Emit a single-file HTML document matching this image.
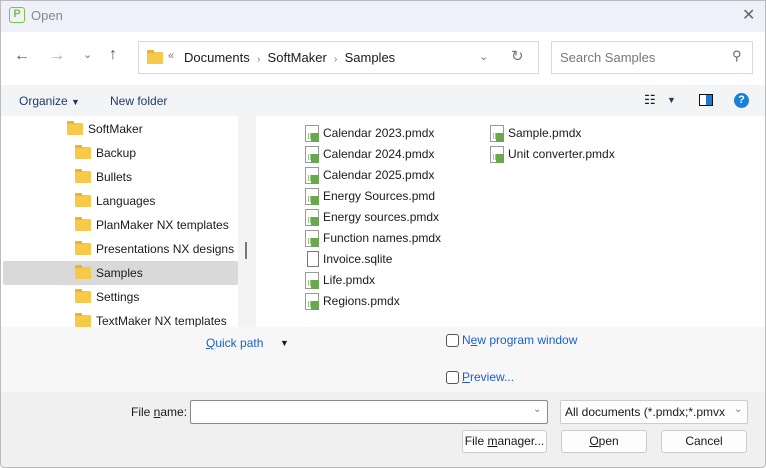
<!DOCTYPE html><html><head><style>
*{box-sizing:border-box;margin:0;padding:0}
body{width:766px;height:468px;overflow:hidden;font-family:"Liberation Sans",sans-serif;font-size:12px;color:#1a1a1a;background:#fff;position:relative}
.a{position:absolute}
.fold{position:absolute;width:16px;height:12px;background:#f7c948;border-radius:1px}
.fold:before{content:"";position:absolute;left:0;top:-2px;width:7px;height:3px;background:#e8b23a;border-radius:1px 1px 0 0}
.fi{position:absolute;width:14px;height:17px;border:1px solid #999;background:#fff}
.fi:after{content:"";position:absolute;right:-1px;bottom:-1px;width:8px;height:9px;background:#6aa84f}
.fi:before{content:"";position:absolute;left:2px;top:7px;width:5px;height:6px;background:repeating-linear-gradient(90deg,#9bc88a 0 1px,#fff 1px 2px)}
.btn{position:absolute;height:23px;border:1px solid #ccc;background:#fdfdfd;border-radius:3px;text-align:center;line-height:21px}
.lnk{color:#1a5fd0}
</style></head><body>
<div class="a" style="left:0;top:0;width:766px;height:32px;background:#eef1f9;border:1px solid #bbb;border-bottom:none"></div>
<div class="a" style="left:9px;top:7px;width:16px;height:16px;border:1.5px solid #7cc242;border-radius:3px;color:#7cc242;font-weight:bold;font-size:11px;text-align:center;line-height:13px">P</div>
<div class="a" style="left:31px;top:8px;color:#888;font-size:13px">Open</div>
<div class="a" style="left:742px;top:5px;color:#666;font-size:16px">✕</div>
<div class="a" style="left:0;top:32px;width:766px;height:436px;border:1px solid #bbb;border-top:none;border-radius:0 0 4px 4px"></div>
<div class="a" style="left:14px;top:47px;color:#555;font-size:16px">←</div>
<div class="a" style="left:49px;top:47px;color:#aaa;font-size:16px">→</div>
<div class="a" style="left:83px;top:48px;color:#777;font-size:11px">⌄</div>
<div class="a" style="left:109px;top:46px;color:#555;font-size:16px">↑</div>
<div class="a" style="left:138px;top:41px;width:401px;height:33px;border:1px solid #d9d9d9"></div>
<div class="fold" style="left:147px;top:52px"></div>
<div class="a" style="left:168px;top:50px;color:#777;font-size:11px">«</div>
<div class="a" style="left:184px;top:50px;font-size:13px">Documents&nbsp;&nbsp;<span style="color:#777;font-size:10px">›</span>&nbsp;&nbsp;SoftMaker&nbsp;&nbsp;<span style="color:#777;font-size:10px">›</span>&nbsp;&nbsp;Samples</div>
<div class="a" style="left:479px;top:50px;color:#777;font-size:11px">⌄</div>
<div class="a" style="left:511px;top:47px;color:#777;font-size:15px">↻</div>
<div class="a" style="left:551px;top:41px;width:202px;height:33px;border:1px solid #d9d9d9"></div>
<div class="a" style="left:560px;top:50px;color:#777;font-size:13px">Search Samples</div>
<div class="a" style="left:732px;top:48px;color:#666;font-size:13px">⚲</div>
<div class="a" style="left:0;top:85px;width:766px;height:31px;background:#f3f4f6;border-left:1px solid #bbb;border-right:1px solid #bbb"></div>
<div class="a" style="left:19px;top:94px;color:#1e3a6a">Organize <span style="font-size:9px">▼</span></div>
<div class="a" style="left:110px;top:94px;color:#1e3a6a">New folder</div>
<div class="a" style="left:644px;top:92px;font-size:13px">☷</div>
<div class="a" style="left:667px;top:95px;font-size:9px;color:#1e3a6a">▼</div>
<div class="a" style="left:699px;top:94px;width:14px;height:12px;border:1.5px solid #111;background:linear-gradient(90deg,#fff 50%,#1c7ad6 50%)"></div>
<div class="a" style="left:734px;top:93px;width:15px;height:15px;border-radius:50%;background:#1a7fd6;color:#fff;font-weight:bold;font-size:11px;text-align:center;line-height:15px">?</div>
<div class="a" style="left:238px;top:116px;width:18px;height:211px;background:#f3f3f3"></div>
<div class="a" style="left:245px;top:242px;width:2px;height:17px;background:#777"></div>
<div class="a" style="left:3px;top:261px;width:235px;height:24px;background:#d9d9d9;border-radius:2px"></div>
<div class="fold" style="left:67px;top:123px"></div><div class="a" style="left:88px;top:122px">SoftMaker</div>
<div class="fold" style="left:75px;top:147px"></div><div class="a" style="left:96px;top:146px">Backup</div>
<div class="fold" style="left:75px;top:171px"></div><div class="a" style="left:96px;top:170px">Bullets</div>
<div class="fold" style="left:75px;top:195px"></div><div class="a" style="left:96px;top:194px">Languages</div>
<div class="fold" style="left:75px;top:219px"></div><div class="a" style="left:96px;top:218px">PlanMaker NX templates</div>
<div class="fold" style="left:75px;top:243px"></div><div class="a" style="left:96px;top:242px">Presentations NX designs</div>
<div class="fold" style="left:75px;top:267px"></div><div class="a" style="left:96px;top:266px">Samples</div>
<div class="fold" style="left:75px;top:291px"></div><div class="a" style="left:96px;top:290px">Settings</div>
<div class="fold" style="left:75px;top:315px"></div><div class="a" style="left:96px;top:314px">TextMaker NX templates</div>
<div class="fi" style="left:305px;top:125px"></div><div class="a" style="left:323px;top:126px">Calendar 2023.pmdx</div>
<div class="fi" style="left:305px;top:146px"></div><div class="a" style="left:323px;top:147px">Calendar 2024.pmdx</div>
<div class="fi" style="left:305px;top:167px"></div><div class="a" style="left:323px;top:168px">Calendar 2025.pmdx</div>
<div class="fi" style="left:305px;top:188px"></div><div class="a" style="left:323px;top:189px">Energy Sources.pmd</div>
<div class="fi" style="left:305px;top:209px"></div><div class="a" style="left:323px;top:210px">Energy sources.pmdx</div>
<div class="fi" style="left:305px;top:230px"></div><div class="a" style="left:323px;top:231px">Function names.pmdx</div>
<div class="a" style="left:307px;top:251px;width:12px;height:16px;border:1px solid #777;background:#fff"></div><div class="a" style="left:323px;top:252px">Invoice.sqlite</div>
<div class="fi" style="left:305px;top:272px"></div><div class="a" style="left:323px;top:273px">Life.pmdx</div>
<div class="fi" style="left:305px;top:293px"></div><div class="a" style="left:323px;top:294px">Regions.pmdx</div>
<div class="fi" style="left:490px;top:125px"></div><div class="a" style="left:508px;top:126px">Sample.pmdx</div>
<div class="fi" style="left:490px;top:146px"></div><div class="a" style="left:508px;top:147px">Unit converter.pmdx</div>
<div class="a" style="left:1px;top:327px;width:764px;height:65px;background:#f7f7f7"></div>
<div class="a lnk" style="left:206px;top:336px"><u>Q</u>uick path</div>
<div class="a" style="left:280px;top:338px;font-size:9px">▼</div>
<div class="a" style="left:446px;top:334px;width:13px;height:13px;border:1px solid #555;border-radius:3px;background:#fff"></div>
<div class="a lnk" style="left:462px;top:333px">N<u>e</u>w program window</div>
<div class="a" style="left:446px;top:371px;width:13px;height:13px;border:1px solid #555;border-radius:3px;background:#fff"></div>
<div class="a lnk" style="left:462px;top:370px"><u>P</u>review...</div>
<div class="a" style="left:1px;top:392px;width:764px;height:75px;background:#f0f0f0;border-radius:0 0 4px 4px"></div>
<div class="a" style="left:131px;top:405px">File <u>n</u>ame:</div>
<div class="a" style="left:190px;top:400px;width:358px;height:24px;border:1px solid #8a8a8a;background:#fff;border-radius:2px"></div>
<div class="a" style="left:533px;top:404px;color:#777;font-size:10px">⌄</div>
<div class="a" style="left:560px;top:400px;width:188px;height:24px;border:1px solid #ccc;background:#fdfdfd;border-radius:2px;padding:4px 0 0 4px;white-space:nowrap;overflow:hidden">All documents (*.pmdx;*.pmvx</div>
<div class="a" style="left:734px;top:404px;color:#777;font-size:10px;background:#fdfdfd">⌄</div>
<div class="btn" style="left:462px;top:430px;width:85px">File <u>m</u>anager...</div>
<div class="btn" style="left:561px;top:430px;width:86px"><u>O</u>pen</div>
<div class="btn" style="left:661px;top:430px;width:86px">Cancel</div>
</body></html>
